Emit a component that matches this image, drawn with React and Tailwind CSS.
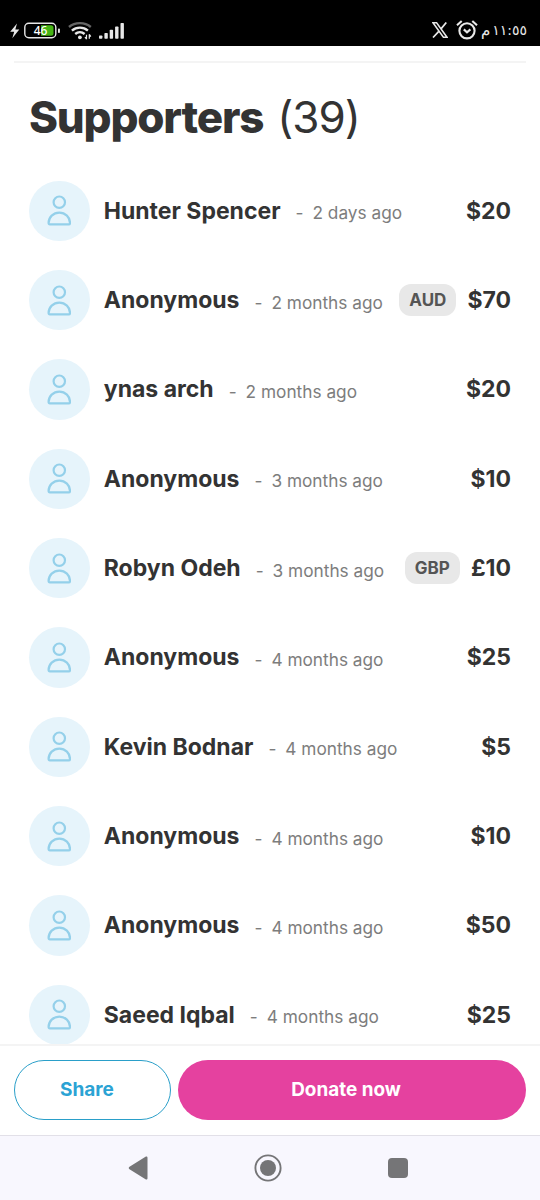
const supporters = [
  { name: "Hunter Spencer", time: "2 days ago", amount: "$20" },
  { name: "Anonymous", time: "2 months ago", amount: "$70", currency: "AUD" },
  { name: "ynas arch", time: "2 months ago", amount: "$20" },
  { name: "Anonymous", time: "3 months ago", amount: "$10" },
  { name: "Robyn Odeh", time: "3 months ago", amount: "£10", currency: "GBP" },
  { name: "Anonymous", time: "4 months ago", amount: "$25" },
  { name: "Kevin Bodnar", time: "4 months ago", amount: "$5" },
  { name: "Anonymous", time: "4 months ago", amount: "$10" },
  { name: "Anonymous", time: "4 months ago", amount: "$50" },
  { name: "Saeed Iqbal", time: "4 months ago", amount: "$25" },
];

const BatteryIcon = () => (
  <svg width="50" height="20" viewBox="0 0 50 20" fill="none">
    <path d="M7 2.5.2 10.800h4L2.300 17.200 9.300 8.500H5.300z" fill="#e8e8e8" />
    <rect x="14.800" y="2.300" width="31" height="14.400" rx="4" stroke="#e8e8e8" strokeWidth="1.400" />
    <path d="M31 4.300h10a2.500 2.500 0 0 1 2.500 2.500v5.400a2.500 2.500 0 0 1-2.500 2.500H31z" fill="#46b414" />
    <rect x="48" y="7.500" width="1.900" height="4.500" rx=".8" fill="#e8e8e8" />
    <text
      x="30.500"
      y="13.800"
      textAnchor="middle"
      className="font-['Noto_Sans',sans-serif] text-[12px] font-medium"
      fill="#fff"
    >
      46
    </text>
  </svg>
);

const WifiIcon = () => (
  <svg width="24" height="20" viewBox="0 0 24 20" fill="none">
    <path d="M1 6c6-5.200 15.800-5.200 21.800 0" stroke="#666" strokeWidth="2.400" />
    <path d="M3.900 9.600c4.600-4 11.400-4 16 0M7.200 13c2.800-2.400 6.600-2.400 9.400 0" stroke="#e8e8e8" strokeWidth="2.400" />
    <circle cx="11.900" cy="16.300" r="1.900" fill="#e8e8e8" />
    <path d="M18.500 13.800v4.500M21.300 13.300v4.500M17 16l1.500 2.200M21.300 13.400l1.500 2.200" stroke="#e8e8e8" strokeWidth="1.200" />
  </svg>
);

const SignalIcon = () => (
  <svg width="26" height="20" viewBox="0 0 26 20" fill="#e8e8e8">
    <rect x="0" y="14.500" width="3.400" height="3.300" rx=".8" />
    <rect x="5.400" y="12" width="3.400" height="5.800" rx=".8" />
    <rect x="10.700" y="8.700" width="3.400" height="9.100" rx=".8" />
    <rect x="16.100" y="5.500" width="3.400" height="12.300" rx=".8" />
    <rect x="21.500" y="2" width="3.400" height="15.800" rx=".8" />
  </svg>
);

const XIcon = () => (
  <svg width="16" height="16" viewBox="0 0 16 16" fill="none" stroke="#e8e8e8">
    <path d="M1 .8h3.600L15 15.200h-3.600z" strokeWidth="1.500" />
    <path d="M14.300.5 9 6.900M6.800 9.300 1 15.500" strokeWidth="1.700" />
  </svg>
);

const AlarmIcon = () => (
  <svg width="22" height="20" viewBox="0 0 22 20" fill="none" stroke="#e8e8e8">
    <circle cx="11" cy="10.800" r="7.600" strokeWidth="2.100" />
    <path d="M1 5.200 5.700 1M21 5.200 16.300 1" strokeWidth="2.100" />
    <path d="m7.800 9.400 3.200 2.900 3.400-2.900" strokeWidth="2.100" />
  </svg>
);

const Avatar = () => (
  <div className="flex size-[60.500px] shrink-0 items-center justify-center rounded-full bg-[#e6f4fb]">
    <svg width="24" height="31" viewBox="0 0 24 31" fill="none" stroke="#94d0ea" strokeWidth="2.200">
      <circle cx="12.300" cy="7.200" r="5.700" />
      <path d="M1.600 28c0-5.800 4.700-10.400 10.700-10.400S23 22.200 23 28c0 1-.4 1.400-1.300 1.400H2.900c-.9 0-1.300-.4-1.300-1.400z" />
    </svg>
  </div>
);

const StatusBar = () => (
  <div className="flex h-[46px] shrink-0 items-center justify-between bg-black pt-[15px] pr-[13px] pl-2.5">
    <div className="flex items-center">
      <BatteryIcon />
      <div className="ml-2 flex gap-[7px]">
        <WifiIcon />
        <SignalIcon />
      </div>
    </div>
    <div className="flex items-center pb-px">
      <XIcon />
      <div className="ml-2">
        <AlarmIcon />
      </div>
      <div
        dir="rtl"
        className="ml-[3px] flex w-[46px] items-center justify-between font-['DejaVu_Sans',sans-serif] leading-5 whitespace-nowrap text-[#e8e8e8]"
      >
        <span className="text-[14px] tracking-[-2.900px]">١١:٥٥</span>
        <span className="text-[15px]">م</span>
      </div>
    </div>
  </div>
);

const Supporter = ({ name, time, amount, currency }) => (
  <li className="flex items-center">
    <Avatar />
    <span className="ml-[14.300px] text-[23px] font-bold">{name}</span>
    <span className="mt-[5px] ml-[15px] flex gap-[9px] text-[17.250px] text-[#7d7d7d]">
      <span>-</span>
      <span>{time}</span>
    </span>
    <div className="ml-auto flex items-center gap-[11px]">
      {currency && (
        <span className="rounded-xl bg-[#e8e8e8] px-2.5 py-1 text-[17px] leading-6 font-bold text-[#555]">
          {currency}
        </span>
      )}
      <span className="text-[23px] font-bold">{amount}</span>
    </div>
  </li>
);

const NavBar = () => (
  <div className="flex h-[65px] shrink-0 items-center justify-between border-t border-[#e2e0e8] bg-[#f8f7fe] pr-[132px] pb-px pl-32">
    <svg width="20" height="24" viewBox="0 0 20 24" fill="#757577">
      <path d="M1.500 10.700 17.500.8c1-.6 2-.2 2 1v20.400c0 1.200-1 1.600-2 1L1.500 13.300c-1-.7-1-1.900 0-2.600z" />
    </svg>
    <svg width="28" height="28" viewBox="0 0 28 28" fill="none">
      <circle cx="14" cy="14" r="12.600" stroke="#757577" strokeWidth="1.900" />
      <circle cx="14" cy="14" r="8" fill="#757577" />
    </svg>
    <div className="size-5 rounded-[4px] bg-[#757577]" />
  </div>
);

const App = () => {
  return (
    <div className="flex h-[1200px] w-[540px] flex-col overflow-hidden bg-white font-['Inter',sans-serif] text-[#333]">
      <StatusBar />
      <div className="min-h-0 flex-1 overflow-hidden px-3.5 pt-[15px]">
        <div className="border-t-2 border-[#f4f4f4] px-[15px]">
          <h2 className="mt-6 flex gap-3.5 text-[44px] leading-[60px]">
            <span className="font-extrabold tracking-[-1.200px]">Supporters</span>
            <span className="font-normal tracking-[-1px]">(39)</span>
          </h2>
          <ul className="mt-[33.500px] flex flex-col gap-[28.850px]">
            {supporters.map((supporter, i) => (
              <Supporter key={i} {...supporter} />
            ))}
          </ul>
        </div>
      </div>
      <div className="flex h-[91px] shrink-0 gap-[7px] border-t-2 border-[#f4f4f4] px-3.5 pt-[14px]">
        <button className="h-[60px] w-[157px] rounded-full border border-[#2a9fc9] pr-[11px] text-[19px] font-bold text-[#2ba3d4]">
          Share
        </button>
        <button className="h-[60px] flex-1 rounded-full bg-[#e5419f] pr-3 text-[18.900px] font-bold text-white">
          Donate now
        </button>
      </div>
      <NavBar />
    </div>
  );
};

export default App;
